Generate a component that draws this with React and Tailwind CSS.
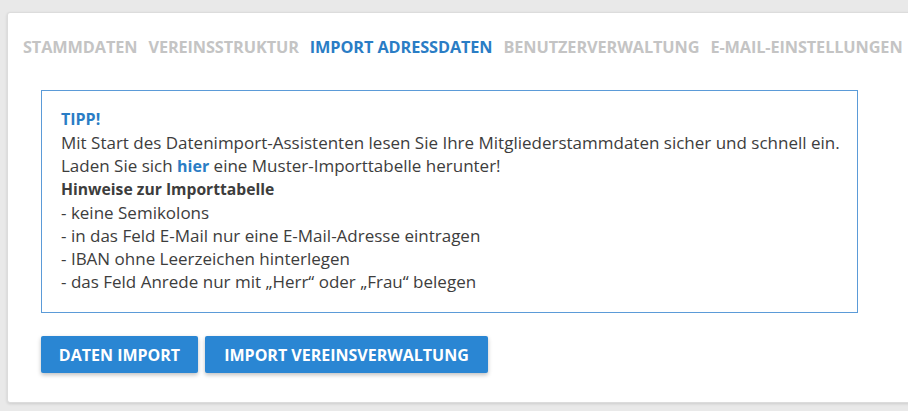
export default function App() {
  const tabs = [
    { label: "STAMMDATEN", active: false },
    { label: "VEREINSSTRUKTUR", active: false },
    { label: "IMPORT ADRESSDATEN", active: true },
    { label: "BENUTZERVERWALTUNG", active: false },
    { label: "E-MAIL-EINSTELLUNGEN", active: false },
  ];
  return (
    <div
      className="w-[908px] h-[411px] overflow-hidden bg-[#e9e9e9] pt-[12px] pl-[7px]"
      style={{ fontFamily: '"Open Sans", "Noto Sans", sans-serif' }}
    >
      <div className="w-[920px] h-[391px] bg-white border border-[#dcdcdc] rounded-[3px] shadow-[0_1px_3px_rgba(0,0,0,0.12)] pl-[15px] pt-[24px]">
        <div className="flex gap-[11px] text-[16.3px] font-bold leading-[20px] tracking-[-0.1px]">
          {tabs.map((t) => (
            <span
              key={t.label}
              className={t.active ? "text-[#2a7dc5]" : "text-[#c4c4c4]"}
            >
              {t.label}
            </span>
          ))}
        </div>
        <div className="ml-[18px] mt-[33px] w-[817px] h-[223px] border border-solid border-[#5b9bd8] pl-[19px] pt-[17px] text-[17px] leading-[23px] text-[#3d3d3d]">
          <div className="font-bold text-[16px] text-[#2a7dc5]">TIPP!</div>
          <div>
            Mit Start des Datenimport-Assistenten lesen Sie Ihre Mitgliederstammdaten sicher und schnell ein.
          </div>
          <div>
            Laden Sie sich <span className="font-bold text-[16px] text-[#2a7dc5]">hier</span> eine Muster-Importtabelle herunter!
          </div>
          <div className="font-bold text-[15.7px]">Hinweise zur Importtabelle</div>
          <div>- keine Semikolons</div>
          <div>- in das Feld E-Mail nur eine E-Mail-Adresse eintragen</div>
          <div>- IBAN ohne Leerzeichen hinterlegen</div>
          <div>- das Feld Anrede nur mit „Herr“ oder „Frau“ belegen</div>
        </div>
        <div className="ml-[18px] mt-[23px] flex gap-[7px]">
          <button className="h-[37px] w-[157px] bg-[#2a86d3] text-white font-bold text-[16px] rounded-[2px] shadow-[0_2px_4px_rgba(0,0,0,0.25)]">
            DATEN IMPORT
          </button>
          <button className="h-[37px] w-[283px] bg-[#2a86d3] text-white font-bold text-[16px] rounded-[2px] shadow-[0_2px_4px_rgba(0,0,0,0.25)]">
            IMPORT VEREINSVERWALTUNG
          </button>
        </div>
      </div>
    </div>
  );
}
